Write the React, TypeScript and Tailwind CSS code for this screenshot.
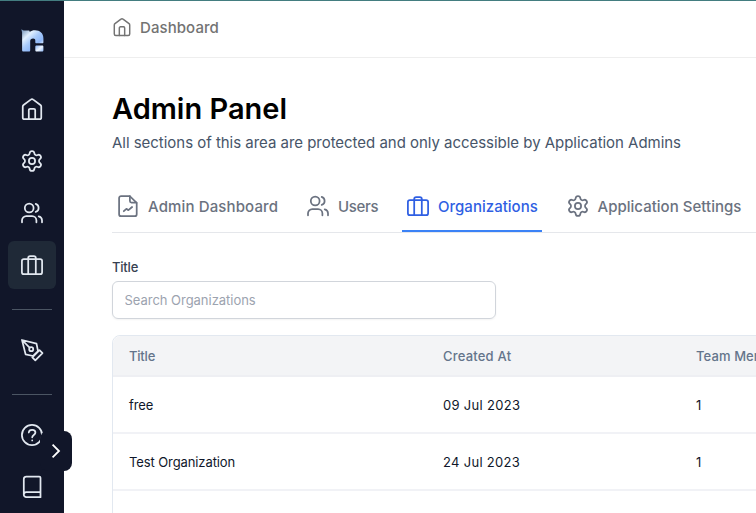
import type { ReactNode } from "react";

type IconProps = { className?: string };

function Svg({ className = "size-6", children }: IconProps & { children: ReactNode }) {
  return (
    <svg
      viewBox="0 0 24 24"
      fill="none"
      stroke="currentColor"
      strokeWidth="1.75"
      strokeLinecap="round"
      strokeLinejoin="round"
      className={`${className} shrink-0`}
    >
      {children}
    </svg>
  );
}

const HomeIcon = ({ className }: IconProps) => (
  <Svg className={className}>
    <path d="M2.75 9.6c0-.6.3-1.200.8-1.600l7.200-5.400a2 2 0 0 1 2.500 0l7.200 5.400c.5.4.8 1 .8 1.600v10.800a1.800 1.800 0 0 1-1.800 1.800H4.550a1.800 1.800 0 0 1-1.800-1.800z" />
    <path d="M8.8 22.1v-9a1.3 1.3 0 0 1 1.3-1.3h3.8a1.3 1.3 0 0 1 1.3 1.3v9" />
  </Svg>
);

const GearIcon = ({ className }: IconProps) => (
  <Svg className={className}>
    <path d="M9.671 4.136a2.34 2.34 0 0 1 4.659 0 2.34 2.34 0 0 0 3.319 1.915 2.34 2.34 0 0 1 2.33 4.033 2.34 2.34 0 0 0 0 3.831 2.34 2.34 0 0 1-2.33 4.033 2.34 2.34 0 0 0-3.319 1.915 2.34 2.34 0 0 1-4.659 0 2.34 2.34 0 0 0-3.32-1.915 2.34 2.34 0 0 1-2.33-4.033 2.34 2.34 0 0 0 0-3.831A2.34 2.34 0 0 1 6.35 6.051a2.34 2.34 0 0 0 3.319-1.915" />
    <circle cx="12" cy="12" r="3.1" />
  </Svg>
);

const UsersIcon = ({ className }: IconProps) => (
  <Svg className={className}>
    <circle cx="9.2" cy="6.9" r="4.4" />
    <path d="M2 21.3v-2A4.3 4.3 0 0 1 6.3 15h5.8a4.3 4.3 0 0 1 4.3 4.3v2" />
    <path d="M15.7 2.9a4.2 4.2 0 0 1 0 8M18.7 15.3a4.2 4.2 0 0 1 3.3 4v2" />
  </Svg>
);

const BriefcaseIcon = ({ className }: IconProps) => (
  <Svg className={className}>
    <rect x="1.9" y="6" width="20.2" height="15.2" rx="2" />
    <path d="M8.2 21V5a2 2 0 0 1 2-2h3.6a2 2 0 0 1 2 2v16" />
  </Svg>
);

const FileChartIcon = ({ className }: IconProps) => (
  <Svg className={className}>
    <path d="M13.7 2H5.1a2 2 0 0 0-2 2v16.2a2 2 0 0 0 2 2h13.6a2 2 0 0 0 2-2V8.9z" />
    <path d="M13.9 2.2v4.9a1.6 1.6 0 0 0 1.6 1.6h5M7.8 17.2l2.6-2.4 2 1.4 3.7-3.2" />
  </Svg>
);

const PenIcon = ({ className }: IconProps) => (
  <Svg className={className}>
    <path d="m12.3 19.3 7.2-7.2 3 3-7.2 7.2zM18 13.2l-1.5-7.5L2 2l3.6 14.4 7.5 1.6zM2 2l7.6 7.6" />
    <circle cx="11.2" cy="11.2" r="2" />
  </Svg>
);

const HelpIcon = ({ className }: IconProps) => (
  <Svg className={className}>
    <circle cx="12" cy="12" r="10.1" />
    <path d="M8.8 9.5c.3-3.6 6.7-3.3 6.6.1-.1 2.3-3.2 2.5-3.2 4.7M12.2 17.3v.1" />
  </Svg>
);

const BookIcon = ({ className }: IconProps) => (
  <Svg className={className}>
    <path d="M3.8 19.7V4a2.5 2.5 0 0 1 2.5-2.5h12.9a1.3 1.3 0 0 1 1.3 1.3v19.4H6.3a2.5 2.5 0 0 1 0-5h14.2" />
  </Svg>
);

function Logo() {
  return (
    <svg viewBox="0 0 24 24" className="size-6">
      <defs>
        <linearGradient id="shine" gradientUnits="userSpaceOnUse" x1="2" y1="1" x2="23" y2="24">
          <stop offset="0" stopColor="#6f8fb5" />
          <stop offset=".28" stopColor="#e2f0ff" />
          <stop offset=".48" stopColor="#a9cbfb" />
          <stop offset=".68" stopColor="#8db6f7" />
          <stop offset=".85" stopColor="#edf5ff" />
          <stop offset="1" stopColor="#8fb8f8" />
        </linearGradient>
      </defs>
      <path
        fill="url(#shine)"
        d="M1.300 1.300 3.600 2.600h5.200c.5 0 .9.3.9.9v.6C11 2.800 12.800 2.200 15 2.200c5 0 8.400 3 8.400 8v4c0 .6-.4 1-1 1h-6.100c-.6 0-1-.4-1-1v-1.700c0-1.200-.8-1.900-2.200-1.900-1.900 0-2.900 1-2.900 2.700v8.900c0 .9-.4 1.300-1.300 1.300H3.500c-.9 0-1.400-.5-1.400-1.300V4.500zM16.600 17.400h5.500c.8 0 1.300.5 1.300 1.200v3.600c0 .8-.5 1.300-1.300 1.300h-5.500c-.8 0-1.300-.5-1.300-1.300v-3.600c0-.7.5-1.200 1.300-1.200z"
      />
    </svg>
  );
}

function SideLink({ children, active = false }: { children: ReactNode; active?: boolean }) {
  return (
    <a className={`flex size-12 shrink-0 items-center justify-center rounded-md ${active ? "bg-[#1f2937]" : ""}`}>
      {children}
    </a>
  );
}

function Sidebar() {
  return (
    <aside className="relative flex w-16 shrink-0 flex-col items-center bg-[#111629] text-[#e2e8f0]">
      <div className="mt-[27px] h-6">
        <Logo />
      </div>
      <nav className="mt-[33px] flex flex-col gap-1">
        <SideLink><HomeIcon /></SideLink>
        <SideLink><GearIcon /></SideLink>
        <SideLink><UsersIcon /></SideLink>
        <SideLink active><BriefcaseIcon /></SideLink>
      </nav>
      <div className="mt-5 h-px w-10 shrink-0 bg-[#4b5563]" />
      <div className="mt-4"><SideLink><PenIcon /></SideLink></div>
      <div className="mt-5 h-px w-10 shrink-0 bg-[#4b5563]" />
      <nav className="mt-4 flex flex-col gap-1">
        <SideLink><HelpIcon /></SideLink>
        <SideLink><BookIcon /></SideLink>
      </nav>
      <button className="absolute top-[430px] left-10 flex h-10 w-8 items-center justify-center rounded-lg bg-[#111629] text-white">
        <svg viewBox="0 0 16 16" className="size-4" fill="none" stroke="currentColor" strokeWidth="1.8">
          <path d="m4.6 1.6 6.400 6.400-6.400 6.400" />
        </svg>
      </button>
    </aside>
  );
}

const tabs = [
  { label: "Admin Dashboard", text: "w-[130px] tracking-[0.13px]", icon: <FileChartIcon /> },
  { label: "Users", text: "w-10 tracking-[-0.3px]", icon: <UsersIcon /> },
  { label: "Organizations", text: "w-[99.5px] tracking-[0.02px]", icon: <BriefcaseIcon />, active: true },
  { label: "Application Settings", text: "w-[145px] tracking-[0.02px]", icon: <GearIcon /> },
];

const rows = [
  { title: "free", created: "09 Jul 2023", members: "1" },
  { title: "Test Organization", created: "24 Jul 2023", members: "1" },
  { title: "", created: "", members: "" },
];

export default function App() {
  return (
    <div className="flex h-[513px] w-[756px] flex-col overflow-hidden bg-white font-['Inter',sans-serif]">
      <div className="h-px shrink-0 bg-[#437d80]" />
      <div className="flex min-h-0 flex-1">
        <Sidebar />
        <main className="min-w-0 flex-1 whitespace-nowrap">
          <header className="flex h-[57px] items-center border-b border-[#eeeeee] pb-[3px] pl-12 text-[#737373]">
            <HomeIcon className="mb-px size-5" />
            <span className="mt-0.5 ml-2 text-[15px] font-medium tracking-[0.08px]">Dashboard</span>
          </header>
          <div className="pl-12">
            <h1 className="mt-8 text-[29px] leading-[38px] font-semibold text-black">Admin Panel</h1>
            <p className="mt-[3px] text-[15px] leading-6 tracking-[-0.03px] text-[#475569]">
              All sections of this area are protected and only accessible by Application Admins
            </p>
            <div className="mt-[27px] flex h-[51px] gap-5 border-b border-[#e5e7eb]">
              {tabs.map((t) => (
                <a
                  key={t.label}
                  className={`flex h-[50px] shrink-0 items-center gap-2 border-b-2 px-1 ${
                    t.active ? "border-[#3b82f6] text-[#2f5fe3]" : "border-transparent text-[#6b7280]"
                  }`}
                >
                  {t.icon}
                  <span className={`${t.text} mt-0.5 text-[15px] font-medium`}>{t.label}</span>
                </a>
              ))}
            </div>
            <label className="mt-6 block text-[13px] leading-5 font-medium tracking-[-0.2px] text-[#374151]">Title</label>
            <input
              className="mt-1 block h-[38px] w-96 rounded-md border border-[#d1d5db] px-[11.5px] text-[13px] tracking-[-0.03px] shadow-xs placeholder:text-[#9ca3af]"
              placeholder="Search Organizations"
            />
            <div className="mt-4 w-[760px] rounded-lg border border-[#e2e8f0] text-[13px]">
              <div className="grid h-[41px] grid-cols-[314px_253px_1fr] items-center rounded-t-lg border-b-2 border-[#eeeff3] bg-[#f3f4f6] pt-0.5 pl-4 font-medium text-[#64748b]">
                <span className="tracking-[-0.2px]">Title</span>
                <span className="tracking-[0.2px]">Created At</span>
                <span className="tracking-[0.1px]">Team Members</span>
              </div>
              {rows.map((r, i) => (
                <div
                  key={i}
                  className="grid h-[57px] grid-cols-[314px_253px_1fr] items-center border-b-2 border-[#f1f2f6] pt-0.5 pl-4 text-[#0f172a]"
                >
                  <span className="tracking-[-0.1px]">{r.title}</span>
                  <span className="tracking-[0.3px]">{r.created}</span>
                  <span>{r.members}</span>
                </div>
              ))}
            </div>
          </div>
        </main>
      </div>
    </div>
  );
}
